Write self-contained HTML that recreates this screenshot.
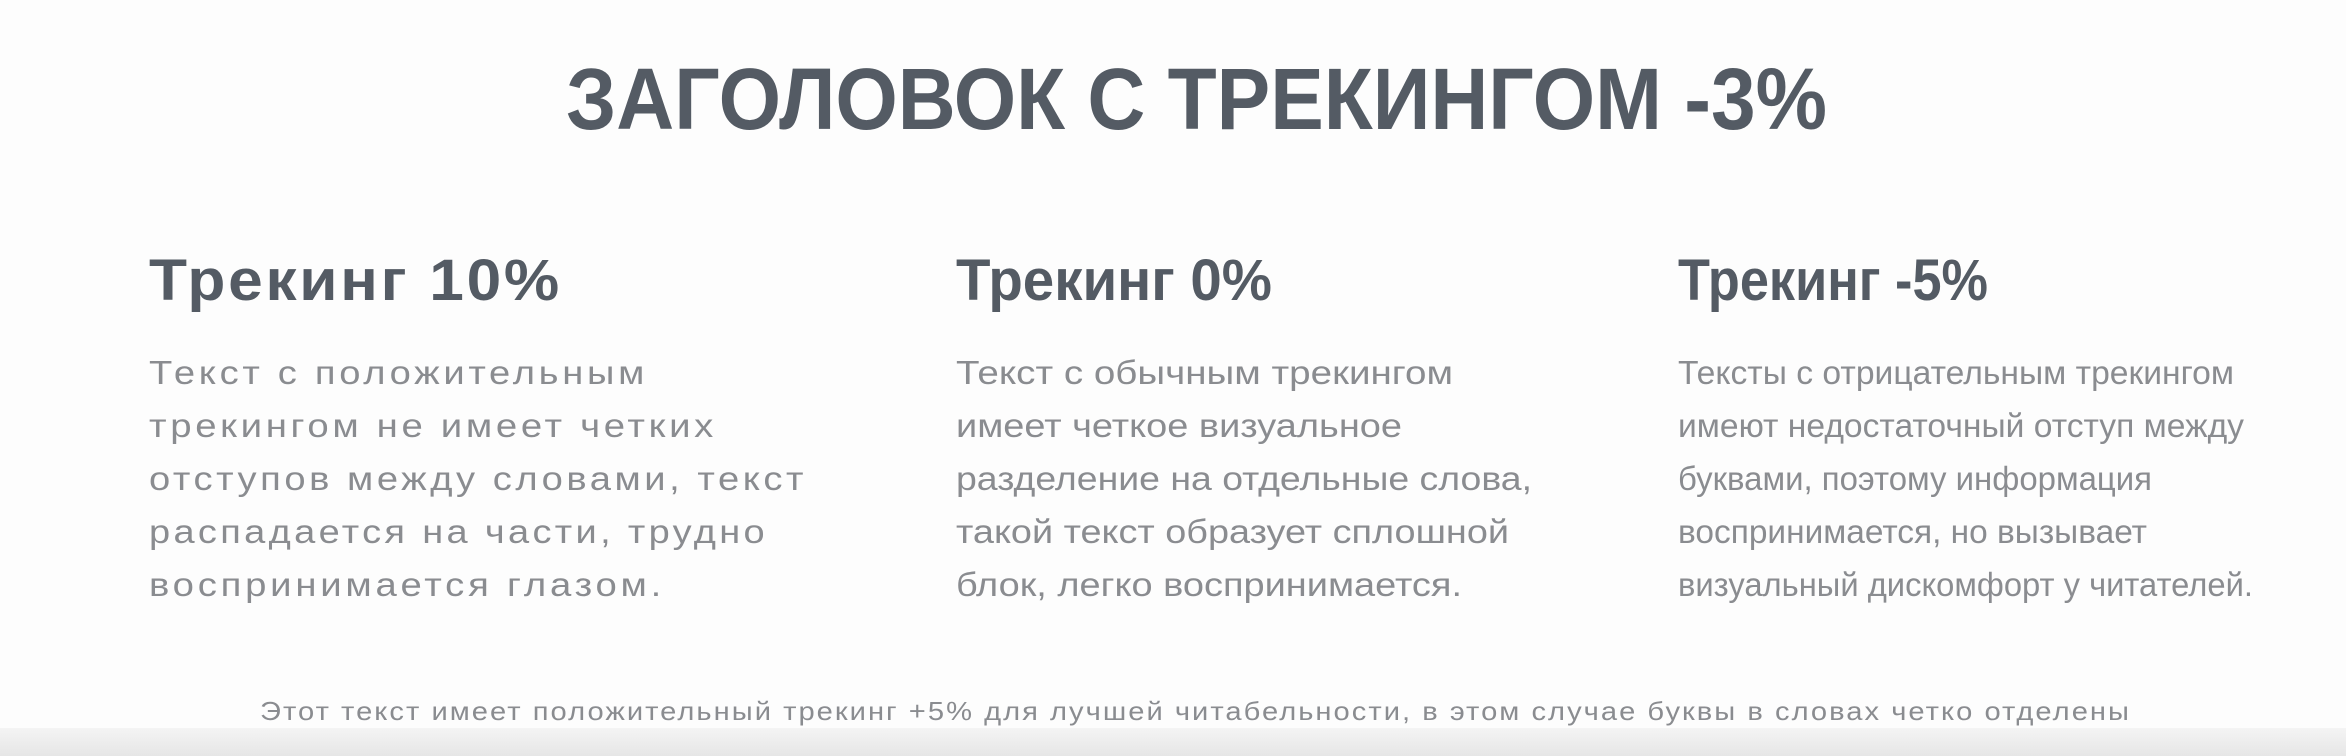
<!DOCTYPE html>
<html><head><meta charset="utf-8"><style>
html,body{margin:0;padding:0;}
body{width:2346px;height:756px;overflow:hidden;background:#fdfdfd;position:relative;font-family:"Liberation Sans",sans-serif;}
.l{position:absolute;white-space:nowrap;transform-origin:0 0;line-height:1;}
.t{color:#545b64;font-weight:bold;font-size:87px;}
.h{color:#545b64;font-weight:bold;font-size:58px;}
.b{color:#8a8c90;font-size:33px;}
.f{color:#8a8c90;font-size:26px;}
.bar{position:absolute;left:0;right:0;top:728px;height:28px;background:linear-gradient(#f4f4f4,#e6e6e6);}
</style></head><body>
<div class="l t" style="left:566px;top:56px" title="1261">ЗАГОЛОВОК С ТРЕКИНГОМ -3%</div>

<div class="l h sp" style="left:149px;top:252px" title="413">Трекинг 10%</div>
<div class="l h" style="left:956px;top:252px" title="316">Трекинг 0%</div>
<div class="l h" style="left:1678px;top:252px" title="310">Трекинг -5%</div>

<div class="l b sp" style="left:149px;top:356px" title="499">Текст с положительным</div>
<div class="l b sp" style="left:149px;top:409px" title="568">трекингом не имеет четких</div>
<div class="l b sp" style="left:149px;top:462px" title="658">отступов между словами, текст</div>
<div class="l b sp" style="left:149px;top:515px" title="619">распадается на части, трудно</div>
<div class="l b sp" style="left:149px;top:568px" title="516">воспринимается глазом.</div>

<div class="l b" style="left:956px;top:356px" title="497">Текст с обычным трекингом</div>
<div class="l b" style="left:956px;top:409px" title="446">имеет четкое визуальное</div>
<div class="l b" style="left:956px;top:462px" title="576">разделение на отдельные слова,</div>
<div class="l b" style="left:956px;top:515px" title="553">такой текст образует сплошной</div>
<div class="l b" style="left:956px;top:568px" title="506">блок, легко воспринимается.</div>

<div class="l b" style="left:1678px;top:356px" title="556">Тексты с отрицательным трекингом</div>
<div class="l b" style="left:1678px;top:409px" title="566">имеют недостаточный отступ между</div>
<div class="l b" style="left:1678px;top:462px" title="474">буквами, поэтому информация</div>
<div class="l b" style="left:1678px;top:515px" title="469">воспринимается, но вызывает</div>
<div class="l b" style="left:1678px;top:568px" title="575">визуальный дискомфорт у читателей.</div>

<div class="l f sp" style="left:260px;top:698px" title="1871">Этот текст имеет положительный трекинг +5% для лучшей читабельности, в этом случае буквы в словах четко отделены</div>
<div class="bar"></div>
<script>
document.querySelectorAll('.l').forEach(function(e){
 var w=parseFloat(e.getAttribute('title'));e.removeAttribute('title');
 var cur=e.getBoundingClientRect().width;
 if(e.classList.contains('sp')){
  var n=e.textContent.length;
  var ls=0.5*(w-cur)/n;
  if(ls<0)ls=0;
  e.style.letterSpacing=ls+'px';
  var c2=e.getBoundingClientRect().width;
  e.style.transform='scaleX('+(w/c2)+')';
 } else {
  e.style.transform='scaleX('+(w/cur)+')';
 }
});
</script>
</body></html>
